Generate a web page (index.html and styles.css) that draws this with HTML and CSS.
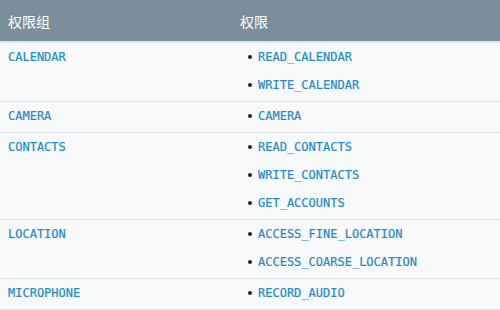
FILE: index.html
```html
<!DOCTYPE html>
<html lang="zh">
<head>
<meta charset="utf-8">
<link rel="stylesheet" href="styles.css">
</head>
<body>
<table class="perm-table">
  <thead>
    <tr><th class="col-group">权限组</th><th>权限</th></tr>
  </thead>
  <tbody>
    <tr>
      <td><code>CALENDAR</code></td>
      <td><ul><li><code>READ_CALENDAR</code></li><li><code>WRITE_CALENDAR</code></li></ul></td>
    </tr>
    <tr>
      <td><code>CAMERA</code></td>
      <td><ul><li><code>CAMERA</code></li></ul></td>
    </tr>
    <tr>
      <td><code>CONTACTS</code></td>
      <td><ul><li><code>READ_CONTACTS</code></li><li><code>WRITE_CONTACTS</code></li><li><code>GET_ACCOUNTS</code></li></ul></td>
    </tr>
    <tr>
      <td><code>LOCATION</code></td>
      <td><ul><li><code>ACCESS_FINE_LOCATION</code></li><li><code>ACCESS_COARSE_LOCATION</code></li></ul></td>
    </tr>
    <tr>
      <td><code>MICROPHONE</code></td>
      <td><ul><li><code>RECORD_AUDIO</code></li></ul></td>
    </tr>
  </tbody>
</table>
</body>
</html>
```
FILE: styles.css
```css
html, body {
  margin: 0;
  padding: 0;
  background: #ffffff;
}
body {
  font-family: "Noto Sans CJK SC", "Noto Sans", sans-serif;
}
.perm-table {
  width: 500px;
  border-collapse: collapse;
  table-layout: fixed;
}
.perm-table th {
  height: 41px;
  padding: 0 8px;
  background: #7a8f9a;
  color: #ffffff;
  font-size: 14px;
  font-weight: 400;
  text-align: left;
  vertical-align: middle;
  border-bottom: 2px solid #d4e6ef;
}
.perm-table th.col-group {
  width: 216px;
}
.perm-table td {
  padding: 5px 8px 7px;
  background: #f8f9fa;
  border-bottom: 1px solid #e1e4e6;
  vertical-align: top;
  font-family: "DejaVu Sans Mono", "Liberation Mono", monospace;
  font-size: 12px;
  line-height: 18px;
}
.perm-table code {
  display: block;
  font-family: "DejaVu Sans Mono", "Liberation Mono", monospace;
  font-size: 12px;
  line-height: 18px;
  color: #1f8ac8;
  -webkit-text-stroke: 0.2px #1f8ac8;
}
.perm-table ul {
  list-style: none;
  margin: 0;
  padding: 0 0 0 8px;
}
.perm-table li {
  display: flex;
  align-items: center;
  height: 18px;
}
.perm-table li + li {
  margin-top: 10px;
}
.perm-table li::before {
  content: "";
  width: 4px;
  height: 4px;
  border-radius: 50%;
  background: #222222;
  margin-right: 6px;
  flex: none;
}
```
